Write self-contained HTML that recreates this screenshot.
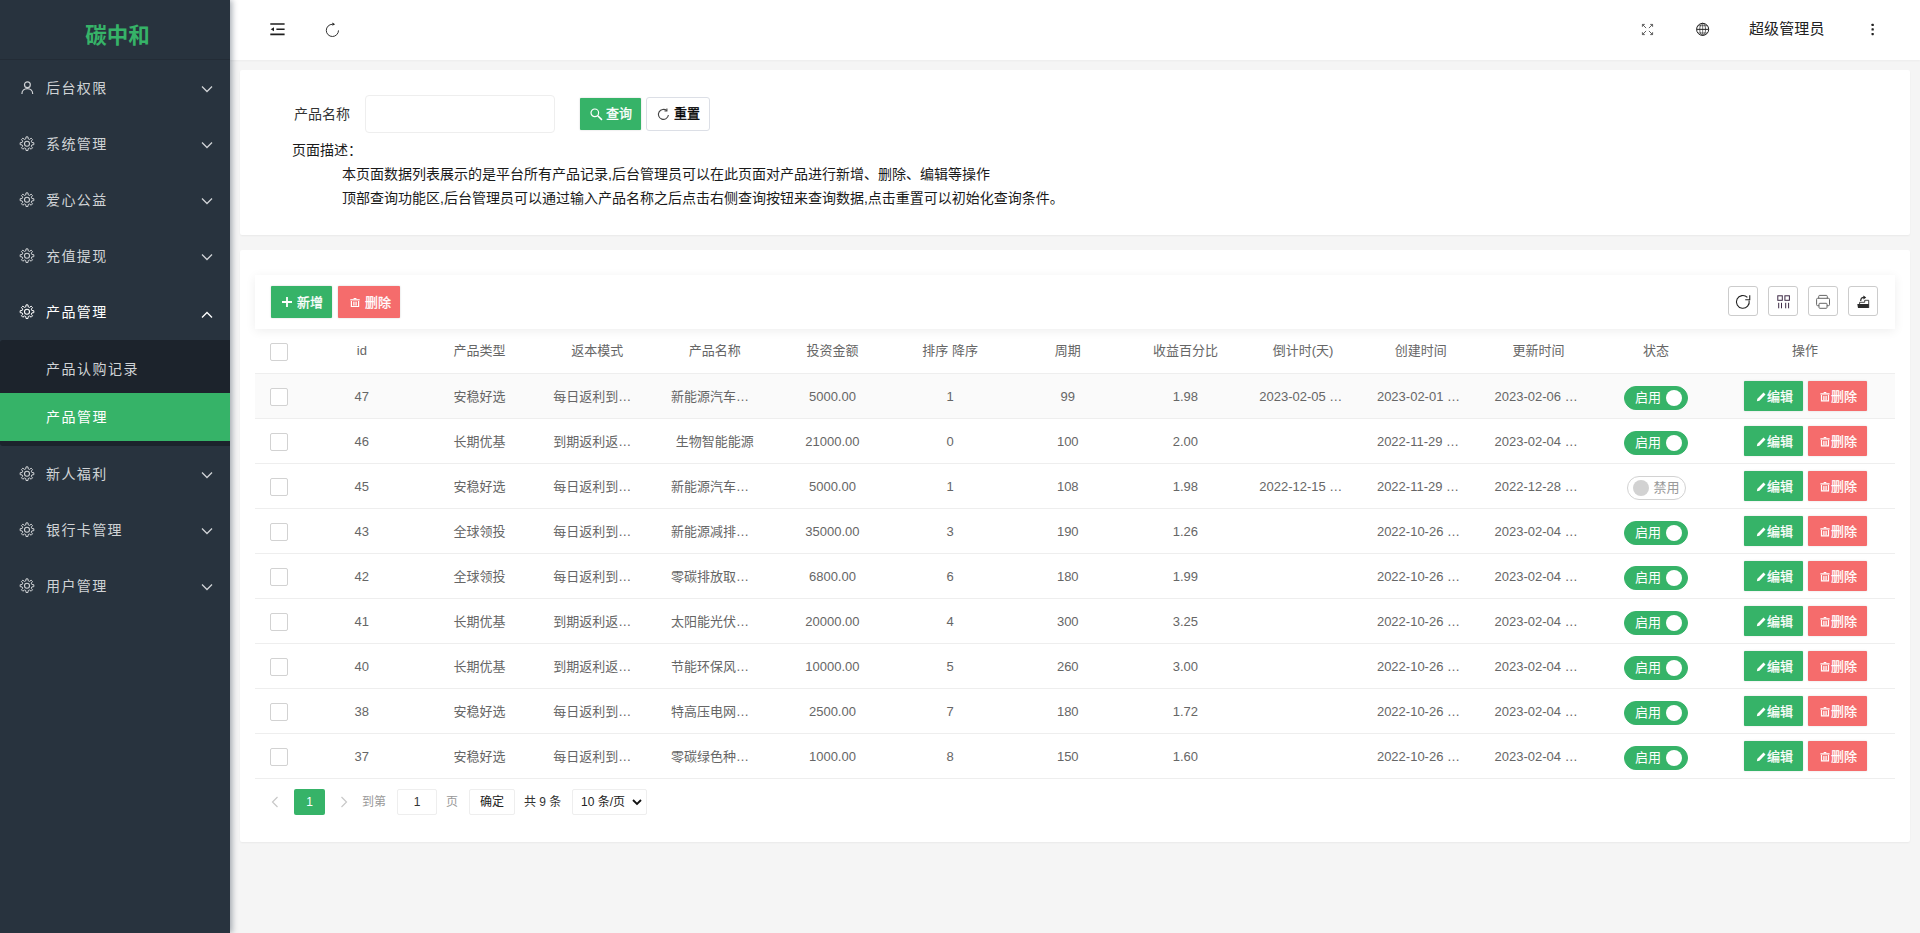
<!DOCTYPE html>
<html lang="zh-CN">
<head>
<meta charset="utf-8">
<title>碳中和</title>
<style>
*{box-sizing:border-box;margin:0;padding:0}
html,body{width:1920px;height:933px;overflow:hidden}
body{font:14px/24px "Liberation Sans","Noto Sans CJK SC",sans-serif;color:#333;background:#f5f5f5;position:relative}
ul{list-style:none}
svg{display:block}
/* ---------- sidebar ---------- */
.side{position:absolute;left:0;top:0;width:230px;height:933px;background:#28333e;z-index:10;box-shadow:2px 0 6px rgba(0,21,41,.35)}
.logo{height:60px;line-height:60px;text-align:center;color:#36b368;font-size:21.5px;font-weight:bold;border-bottom:1px solid rgba(0,0,0,.12);padding-top:5.5px;padding-left:5px;letter-spacing:0}
.nav>li>a{display:block;height:56px;line-height:56px;color:#d0d3d6;font-size:14px;position:relative;padding-left:46px;letter-spacing:1.4px}
.nav>li>a.on{color:#fff}
.nav .ico{position:absolute;left:19px;top:20px;width:16px;height:16px}
.nav .arr{position:absolute;left:201px;top:24px;width:12px;height:8px}
.sub{background:#1c232c;padding:5px 0;height:106px;border-radius:3px 0 0 3px}
.sub a{display:block;height:48px;line-height:48px;padding-left:46px;color:#d0d3d6;font-size:14px;letter-spacing:1.5px}
.sub a.cur{background:#36b368;color:#fff}
/* ---------- header ---------- */
.head{position:absolute;left:230px;top:0;width:1690px;height:60px;background:#fff;box-shadow:0 1px 2px rgba(0,0,0,.04)}
.head .hi{position:absolute;top:21px}
.head .uname{position:absolute;left:1519px;top:0;line-height:58px;font-size:15px;color:#222;letter-spacing:.1px}
/* ---------- cards ---------- */
.card{position:absolute;left:240px;width:1670px;background:#fff;border-radius:2px;box-shadow:0 1px 2px rgba(0,0,0,.05)}
.c1{top:70px;height:165px}
.c2{top:250px;height:592px}
.lbl{position:absolute;left:54px;top:32px;font-size:14px;line-height:24px;color:#333}
.inp{position:absolute;left:125px;top:25px;width:190px;height:38px;border:1px solid #eee;border-radius:4px;background:#fff}
.btn{position:absolute;display:block;color:#fff;font-size:13px;white-space:nowrap;border-radius:1px;-webkit-text-stroke:.3px #fff}
.btn.rs{-webkit-text-stroke:.3px #000}
.desc{position:absolute;left:52px;font-size:14px;line-height:24px;color:#1a1a1a;white-space:nowrap}
/* ---------- table ---------- */
.tool{position:absolute;left:15px;top:25px;width:1640px;height:54px;background:#fff;box-shadow:0 2px 10px rgba(0,0,0,.07);z-index:2}
.tbox{position:absolute;top:11px;width:30px;height:30px;border:1px solid #ccc;border-radius:3px;background:#fff}
table{position:absolute;left:15px;top:79px;width:1640px;border-collapse:separate;border-spacing:0;table-layout:fixed;font-size:13px;color:#666}
th,td{padding-top:1px !important;height:45px;border-bottom:1px solid #eee;text-align:center;font-weight:normal;white-space:nowrap;overflow:hidden;padding:0;line-height:24px;vertical-align:middle}
tr.hov td{background:#fafafa}
th{padding-top:0 !important}
td.l{text-align:left;padding-left:15px}
.ti{position:absolute;left:-1px;top:-1px}
.cb{display:block;width:18px;height:18px;border:1px solid #d2d2d2;border-radius:2px;background:#fff;margin:1px 0 0 15px}
.sw{display:inline-block;vertical-align:middle;height:24px;border-radius:12px;position:relative;font-size:13px;line-height:22px;margin-top:3px}
.sw.on{width:64px;background:#36b368;border:1px solid #36b368;color:#fff;text-align:left;padding-left:10px}
.sw.on i{position:absolute;right:5px;top:3px;width:16px;height:16px;border-radius:50%;background:#fff}
.sw.off{width:59px;background:#fff;border:1px solid #d2d2d2;color:#999;text-align:left;padding-left:26px}
.sw.off i{position:absolute;left:5px;top:3px;width:16px;height:16px;border-radius:50%;background:#d2d2d2}
.ab{margin-top:-1px;display:inline-block;vertical-align:middle;width:59px;height:30px;line-height:32px;color:#fff;font-size:13px;-webkit-text-stroke:.25px #fff;border-radius:1px;position:relative;text-align:left;box-shadow:0 0 2px rgba(0,0,0,.15)}
.ab.e{background:#36b368;margin-right:5px;padding-left:23px}
.ab.d{background:#f56c6c;padding-left:23px}
.ab svg{position:absolute;left:12px;top:11px}
td.op{padding-left:1px}
.pg{position:absolute;left:15px;top:538px;height:28px;font-size:12px;color:#999;line-height:28px}
.pg>*{position:absolute;top:0;white-space:nowrap}
</style>
</head>
<body>
<div class="side">
  <div class="logo">碳中和</div>
  <ul class="nav">
    <li><a><svg class="ico" viewBox="0 0 16 16" width="16" height="16" fill="none" stroke="currentColor" stroke-width="1.200"><circle cx="8.400" cy="4.800" r="2.900"/><path d="M2.900 13.900C2.900 10.600 5.400 8.700 8.300 8.700S13.700 10.600 13.700 13.900"/></svg>后台权限<svg class="arr" style="top:25px" viewBox="0 0 12 8" width="12" height="8" fill="none" stroke="currentColor" stroke-width="1.3"><path d="M1 1.5l5 5 5-5"/></svg></a></li>
    <li><a><svg class="ico" viewBox="0 0 16 16" width="16" height="16" fill="none" stroke="currentColor" stroke-width="1" stroke-linejoin="round"><circle cx="8" cy="7.700" r="2.500" stroke-width="1.100"/><path d="M6.79 2.85L7.03 0.87L8.97 0.87L9.21 2.85L10.58 3.42L12.14 2.18L13.52 3.56L12.28 5.12L12.85 6.49L14.83 6.73L14.83 8.67L12.85 8.91L12.28 10.28L13.52 11.84L12.14 13.22L10.58 11.98L9.21 12.55L8.97 14.53L7.03 14.53L6.79 12.55L5.42 11.98L3.86 13.22L2.48 11.84L3.72 10.28L3.15 8.91L1.17 8.67L1.17 6.73L3.15 6.49L3.72 5.12L2.48 3.56L3.86 2.18L5.42 3.42z"/></svg>系统管理<svg class="arr" style="top:25px" viewBox="0 0 12 8" width="12" height="8" fill="none" stroke="currentColor" stroke-width="1.3"><path d="M1 1.5l5 5 5-5"/></svg></a></li>
    <li><a><svg class="ico" viewBox="0 0 16 16" width="16" height="16" fill="none" stroke="currentColor" stroke-width="1" stroke-linejoin="round"><circle cx="8" cy="7.700" r="2.500" stroke-width="1.100"/><path d="M6.79 2.85L7.03 0.87L8.97 0.87L9.21 2.85L10.58 3.42L12.14 2.18L13.52 3.56L12.28 5.12L12.85 6.49L14.83 6.73L14.83 8.67L12.85 8.91L12.28 10.28L13.52 11.84L12.14 13.22L10.58 11.98L9.21 12.55L8.97 14.53L7.03 14.53L6.79 12.55L5.42 11.98L3.86 13.22L2.48 11.84L3.72 10.28L3.15 8.91L1.17 8.67L1.17 6.73L3.15 6.49L3.72 5.12L2.48 3.56L3.86 2.18L5.42 3.42z"/></svg>爱心公益<svg class="arr" style="top:25px" viewBox="0 0 12 8" width="12" height="8" fill="none" stroke="currentColor" stroke-width="1.3"><path d="M1 1.5l5 5 5-5"/></svg></a></li>
    <li><a><svg class="ico" viewBox="0 0 16 16" width="16" height="16" fill="none" stroke="currentColor" stroke-width="1" stroke-linejoin="round"><circle cx="8" cy="7.700" r="2.500" stroke-width="1.100"/><path d="M6.79 2.85L7.03 0.87L8.97 0.87L9.21 2.85L10.58 3.42L12.14 2.18L13.52 3.56L12.28 5.12L12.85 6.49L14.83 6.73L14.83 8.67L12.85 8.91L12.28 10.28L13.52 11.84L12.14 13.22L10.58 11.98L9.21 12.55L8.97 14.53L7.03 14.53L6.79 12.55L5.42 11.98L3.86 13.22L2.48 11.84L3.72 10.28L3.15 8.91L1.17 8.67L1.17 6.73L3.15 6.49L3.72 5.12L2.48 3.56L3.86 2.18L5.42 3.42z"/></svg>充值提现<svg class="arr" style="top:25px" viewBox="0 0 12 8" width="12" height="8" fill="none" stroke="currentColor" stroke-width="1.3"><path d="M1 1.5l5 5 5-5"/></svg></a></li>
    <li><a class="on"><svg class="ico" viewBox="0 0 16 16" width="16" height="16" fill="none" stroke="currentColor" stroke-width="1" stroke-linejoin="round"><circle cx="8" cy="7.700" r="2.500" stroke-width="1.100"/><path d="M6.79 2.85L7.03 0.87L8.97 0.87L9.21 2.85L10.58 3.42L12.14 2.18L13.52 3.56L12.28 5.12L12.85 6.49L14.83 6.73L14.83 8.67L12.85 8.91L12.28 10.28L13.52 11.84L12.14 13.22L10.58 11.98L9.21 12.55L8.97 14.53L7.03 14.53L6.79 12.55L5.42 11.98L3.86 13.22L2.48 11.84L3.72 10.28L3.15 8.91L1.17 8.67L1.17 6.73L3.15 6.49L3.72 5.12L2.48 3.56L3.86 2.18L5.42 3.42z"/></svg>产品管理<svg class="arr" viewBox="0 0 12 8" width="12" height="8" fill="none" stroke="currentColor" stroke-width="1.3" style="top:26.500px"><path d="M1 6.5l5-5 5 5"/></svg></a><div class="sub"><a>产品认购记录</a><a class="cur">产品管理</a></div></li>
    <li><a><svg class="ico" viewBox="0 0 16 16" width="16" height="16" fill="none" stroke="currentColor" stroke-width="1" stroke-linejoin="round"><circle cx="8" cy="7.700" r="2.500" stroke-width="1.100"/><path d="M6.79 2.85L7.03 0.87L8.97 0.87L9.21 2.85L10.58 3.42L12.14 2.18L13.52 3.56L12.28 5.12L12.85 6.49L14.83 6.73L14.83 8.67L12.85 8.91L12.28 10.28L13.52 11.84L12.14 13.22L10.58 11.98L9.21 12.55L8.97 14.53L7.03 14.53L6.79 12.55L5.42 11.98L3.86 13.22L2.48 11.84L3.72 10.28L3.15 8.91L1.17 8.67L1.17 6.73L3.15 6.49L3.72 5.12L2.48 3.56L3.86 2.18L5.42 3.42z"/></svg>新人福利<svg class="arr" style="top:25px" viewBox="0 0 12 8" width="12" height="8" fill="none" stroke="currentColor" stroke-width="1.3"><path d="M1 1.5l5 5 5-5"/></svg></a></li>
    <li><a><svg class="ico" viewBox="0 0 16 16" width="16" height="16" fill="none" stroke="currentColor" stroke-width="1" stroke-linejoin="round"><circle cx="8" cy="7.700" r="2.500" stroke-width="1.100"/><path d="M6.79 2.85L7.03 0.87L8.97 0.87L9.21 2.85L10.58 3.42L12.14 2.18L13.52 3.56L12.28 5.12L12.85 6.49L14.83 6.73L14.83 8.67L12.85 8.91L12.28 10.28L13.52 11.84L12.14 13.22L10.58 11.98L9.21 12.55L8.97 14.53L7.03 14.53L6.79 12.55L5.42 11.98L3.86 13.22L2.48 11.84L3.72 10.28L3.15 8.91L1.17 8.67L1.17 6.73L3.15 6.49L3.72 5.12L2.48 3.56L3.86 2.18L5.42 3.42z"/></svg>银行卡管理<svg class="arr" style="top:25px" viewBox="0 0 12 8" width="12" height="8" fill="none" stroke="currentColor" stroke-width="1.3"><path d="M1 1.5l5 5 5-5"/></svg></a></li>
    <li><a><svg class="ico" viewBox="0 0 16 16" width="16" height="16" fill="none" stroke="currentColor" stroke-width="1" stroke-linejoin="round"><circle cx="8" cy="7.700" r="2.500" stroke-width="1.100"/><path d="M6.79 2.85L7.03 0.87L8.97 0.87L9.21 2.85L10.58 3.42L12.14 2.18L13.52 3.56L12.28 5.12L12.85 6.49L14.83 6.73L14.83 8.67L12.85 8.91L12.28 10.28L13.52 11.84L12.14 13.22L10.58 11.98L9.21 12.55L8.97 14.53L7.03 14.53L6.79 12.55L5.42 11.98L3.86 13.22L2.48 11.84L3.72 10.28L3.15 8.91L1.17 8.67L1.17 6.73L3.15 6.49L3.72 5.12L2.48 3.56L3.86 2.18L5.42 3.42z"/></svg>用户管理<svg class="arr" style="top:25px" viewBox="0 0 12 8" width="12" height="8" fill="none" stroke="currentColor" stroke-width="1.3"><path d="M1 1.5l5 5 5-5"/></svg></a></li>
  </ul>
</div>
<div class="head">
<svg class="hi" style="left:38px;top:20px" width="20" height="20" viewBox="0 0 20 20" fill="none" stroke="#1f1f1f" stroke-width="1.65"><path d="M2.300 4h14.300M8.400 9.250h8.200M2.300 14.400h14.300"/><path d="M6 7.300L2.700 9.250 6 11.200z" fill="#1f1f1f" stroke="none"/></svg>
<svg class="hi" style="left:94px;top:22px" width="16" height="16" viewBox="0 0 16 16" fill="none" stroke="#333" stroke-width="1"><path d="M14.500 8.400A6.100 6.100 0 1 1 8.400 2.300"/><path d="M8.400 .600L11.100 2.200 8.400 3.800z" fill="#222" stroke="none"/></svg>
<svg class="hi" style="left:1411px;top:22.500px" width="14" height="14" viewBox="0 0 14 14" fill="none" stroke="#444" stroke-width=".85"><path d="M1.400 3.800V1.400h2.400M1.600 1.600l3.500 3.500M9.200 1.400h2.400v2.400M11.400 1.600L7.900 5.100M1.400 9.200v2.400h2.400M1.600 11.400l3.500-3.500M11.600 9.200v2.400H9.200M11.400 11.400L7.900 7.900"/></svg>
<svg class="hi" style="left:1465px;top:22px" width="15" height="15" viewBox="0 0 15 15" fill="none" stroke="#222"><circle cx="7.650" cy="7.350" r="6.050" stroke-width="1"/><ellipse cx="7.650" cy="7.350" rx="2.900" ry="6.050" stroke-width=".7"/><path d="M1.600 7.350h12.100" stroke-width="1"/><path d="M7.650 1.300v12.100M3 3.700h9.300M3 11h9.300" stroke-width=".6"/></svg>
<svg class="hi" style="left:1640px;top:23px" width="6" height="14" viewBox="0 0 6 14" fill="#222"><rect x="1.500" y=".700" width="2.300" height="2.300" rx=".6"/><rect x="1.500" y="5.300" width="2.300" height="2.300" rx=".6"/><rect x="1.500" y="9.900" width="2.300" height="2.300" rx=".6"/></svg>
  <span class="uname">超级管理员</span>
</div>
<div class="card c1">
  <span class="lbl">产品名称</span>
  <div class="inp"></div>
<span class="btn" style="left:340px;top:28px;width:61px;height:32px;line-height:32px;background:#36b368;padding-left:26px;box-shadow:0 0 2px rgba(0,0,0,.2)"><svg style="position:absolute;left:10px;top:9.500px" width="13" height="13" viewBox="0 0 13 13" fill="none" stroke="#fff" stroke-width="1.200"><circle cx="4.800" cy="4.800" r="3.800"/><path d="M7.700 7.700l4.300 4.200" stroke-width="1.500"/></svg>查询</span>
<span class="btn rs" style="left:406px;top:27px;width:64px;height:34px;line-height:32px;background:#fff;border:1px solid #dcdfe6;color:#000;padding-left:27px;border-radius:3px"><svg style="position:absolute;left:10px;top:9.500px" width="13" height="13" viewBox="0 0 13 13" fill="none" stroke="#444" stroke-width="1.100"><path d="M11.400 7A5 5 0 1 1 9.800 2.700"/><path d="M9.900.600v2.400H7.500"/></svg>重置</span>
  <div class="desc" style="top:68px">页面描述：</div>
  <div class="desc" style="top:92px;left:102px">本页面数据列表展示的是平台所有产品记录,后台管理员可以在此页面对产品进行新增、删除、编辑等操作</div>
  <div class="desc" style="top:116px;left:102px">顶部查询功能区,后台管理员可以通过输入产品名称之后点击右侧查询按钮来查询数据,点击重置可以初始化查询条件。</div>
</div>
<div class="card c2">
  <div class="tool">
<span class="btn" style="left:16px;top:11px;width:61px;height:32px;line-height:33px;background:#36b368;padding-left:26px;box-shadow:0 0 2px rgba(0,0,0,.2)"><svg style="position:absolute;left:11px;top:11px" width="10" height="10" viewBox="0 0 10 10" stroke="#fff" stroke-width="1.800"><path d="M5 0v10M0 5h10"/></svg>新增</span>
<span class="btn" style="left:83px;top:11px;width:62px;height:32px;line-height:33px;background:#f56c6c;padding-left:27px;box-shadow:0 0 2px rgba(0,0,0,.2)"><svg style="position:absolute;left:12px;top:12px" width="10" height="10" viewBox="0 0 10 10" fill="none" stroke="#fff"><path d="M3.600 .500h2.800" stroke-width="1"/><path d="M.300 1.800h9.400" stroke-width="1.200"/><path d="M1.400 2.900v5.600h7.200V2.900" stroke-width="1.200"/><path d="M3.700 3.600v4M6.300 3.600v4M5 3.600v4" stroke-width=".9"/></svg>删除</span>
<span class="tbox" style="left:1473px"><svg class="ti" width="30" height="30" viewBox="0 0 30 30" fill="none" stroke="#222" stroke-width="1.100"><path d="M19.400 11.400A6.400 6.400 0 1 0 21.100 14.500"/><path d="M21.750 9.300v4.400h-4.500"/></svg></span>
<span class="tbox" style="left:1513px"><svg class="ti" width="30" height="30" viewBox="0 0 30 30" fill="none" stroke="#3d2a45" stroke-width="1"><rect x="9.800" y="9.800" width="4.500" height="4.500"/><rect x="16.900" y="9.800" width="4.500" height="4.500"/><path d="M10.700 16.800v5.500M13.500 16.800v5.500M17.700 16.800v5.500M20.600 16.800v5.500"/></svg></span>
<span class="tbox" style="left:1553px"><svg class="ti" width="30" height="30" viewBox="0 0 30 30" fill="none" stroke="#666" stroke-width="1"><path d="M10.700 12.300V10.400a1 1 0 0 1 1-1h6.600a1 1 0 0 1 1 1v1.900"/><path d="M11 19.700H9.600a1 1 0 0 1-1-1v-5.400a1 1 0 0 1 1-1h10.900a1 1 0 0 1 1 1v5.400a1 1 0 0 1-1 1H19"/><rect x="11" y="17.300" width="8" height="5" rx=".8"/></svg></span>
<span class="tbox" style="left:1593px"><svg class="ti" width="30" height="30" viewBox="0 0 30 30"><path d="M9.300 18h11.600v4.100H10z" fill="#2b2b2b"/><path d="M11.600 18v-1.700h5.100v-2h4v7.600" fill="none" stroke="#333" stroke-width=".9"/><path d="M12.700 15c0-2.600 1.300-3.600 3.200-3.600" fill="none" stroke="#333" stroke-width="1.300"/><path d="M15.400 9.500l2.800 2-2.800 1.900z" fill="#222"/></svg></span>
  </div>
  <table>
<colgroup><col style="width:48px"><col style="width:117.67px"><col style="width:117.67px"><col style="width:117.67px"><col style="width:117.67px"><col style="width:117.67px"><col style="width:117.67px"><col style="width:117.67px"><col style="width:117.67px"><col style="width:117.67px"><col style="width:117.67px"><col style="width:117.67px"><col style="width:117.67px"><col style="width:180px"></colgroup>
<tr><th><i class="cb"></i></th><th>id</th><th>产品类型</th><th>返本模式</th><th>产品名称</th><th>投资金额</th><th>排序 降序</th><th>周期</th><th>收益百分比</th><th>倒计时(天)</th><th>创建时间</th><th>更新时间</th><th>状态</th><th>操作</th></tr>
<tr class="hov"><td><i class="cb"></i></td><td>47</td><td>安稳好选</td><td class="l">每日返利到…</td><td class="l">新能源汽车…</td><td>5000.00</td><td>1</td><td>99</td><td>1.98</td><td class="l">2023-02-05 …</td><td class="l">2023-02-01 …</td><td class="l">2023-02-06 …</td><td class="st"><span class="sw on">启用<i></i></span></td><td class="op"><span class="ab e"><svg viewBox="0 0 10 10" width="10" height="10"><path d="M0.800 9.300l.6-2.600L7.500.600l2 2-6.100 6.100z" fill="#fff"/></svg>编辑</span><span class="ab d"><svg viewBox="0 0 10 10" width="10" height="10" fill="none" stroke="#fff"><path d="M3.700 .500h2.600" stroke-width="1"/><path d="M.400 1.900h9.200" stroke-width="1.300"/><path d="M1.500 3v5.900h7V3" stroke-width="1.200"/><path d="M3.700 3.800v4.400M6.300 3.800v4.400M5 3.800v4.400" stroke-width=".9"/></svg>删除</span></td></tr>
<tr><td><i class="cb"></i></td><td>46</td><td>长期优基</td><td class="l">到期返利返…</td><td>生物智能能源</td><td>21000.00</td><td>0</td><td>100</td><td>2.00</td><td></td><td class="l">2022-11-29 …</td><td class="l">2023-02-04 …</td><td class="st"><span class="sw on">启用<i></i></span></td><td class="op"><span class="ab e"><svg viewBox="0 0 10 10" width="10" height="10"><path d="M0.800 9.300l.6-2.600L7.500.600l2 2-6.100 6.100z" fill="#fff"/></svg>编辑</span><span class="ab d"><svg viewBox="0 0 10 10" width="10" height="10" fill="none" stroke="#fff"><path d="M3.700 .500h2.600" stroke-width="1"/><path d="M.400 1.900h9.200" stroke-width="1.300"/><path d="M1.500 3v5.900h7V3" stroke-width="1.200"/><path d="M3.700 3.800v4.400M6.300 3.800v4.400M5 3.800v4.400" stroke-width=".9"/></svg>删除</span></td></tr>
<tr><td><i class="cb"></i></td><td>45</td><td>安稳好选</td><td class="l">每日返利到…</td><td class="l">新能源汽车…</td><td>5000.00</td><td>1</td><td>108</td><td>1.98</td><td class="l">2022-12-15 …</td><td class="l">2022-11-29 …</td><td class="l">2022-12-28 …</td><td class="st"><span class="sw off">禁用<i></i></span></td><td class="op"><span class="ab e"><svg viewBox="0 0 10 10" width="10" height="10"><path d="M0.800 9.300l.6-2.600L7.500.600l2 2-6.100 6.100z" fill="#fff"/></svg>编辑</span><span class="ab d"><svg viewBox="0 0 10 10" width="10" height="10" fill="none" stroke="#fff"><path d="M3.700 .500h2.600" stroke-width="1"/><path d="M.400 1.900h9.200" stroke-width="1.300"/><path d="M1.500 3v5.900h7V3" stroke-width="1.200"/><path d="M3.700 3.800v4.400M6.300 3.800v4.400M5 3.800v4.400" stroke-width=".9"/></svg>删除</span></td></tr>
<tr><td><i class="cb"></i></td><td>43</td><td>全球领投</td><td class="l">每日返利到…</td><td class="l">新能源减排…</td><td>35000.00</td><td>3</td><td>190</td><td>1.26</td><td></td><td class="l">2022-10-26 …</td><td class="l">2023-02-04 …</td><td class="st"><span class="sw on">启用<i></i></span></td><td class="op"><span class="ab e"><svg viewBox="0 0 10 10" width="10" height="10"><path d="M0.800 9.300l.6-2.600L7.500.600l2 2-6.100 6.100z" fill="#fff"/></svg>编辑</span><span class="ab d"><svg viewBox="0 0 10 10" width="10" height="10" fill="none" stroke="#fff"><path d="M3.700 .500h2.600" stroke-width="1"/><path d="M.400 1.900h9.200" stroke-width="1.300"/><path d="M1.500 3v5.900h7V3" stroke-width="1.200"/><path d="M3.700 3.800v4.400M6.300 3.800v4.400M5 3.800v4.400" stroke-width=".9"/></svg>删除</span></td></tr>
<tr><td><i class="cb"></i></td><td>42</td><td>全球领投</td><td class="l">每日返利到…</td><td class="l">零碳排放取…</td><td>6800.00</td><td>6</td><td>180</td><td>1.99</td><td></td><td class="l">2022-10-26 …</td><td class="l">2023-02-04 …</td><td class="st"><span class="sw on">启用<i></i></span></td><td class="op"><span class="ab e"><svg viewBox="0 0 10 10" width="10" height="10"><path d="M0.800 9.300l.6-2.600L7.500.600l2 2-6.100 6.100z" fill="#fff"/></svg>编辑</span><span class="ab d"><svg viewBox="0 0 10 10" width="10" height="10" fill="none" stroke="#fff"><path d="M3.700 .500h2.600" stroke-width="1"/><path d="M.400 1.900h9.200" stroke-width="1.300"/><path d="M1.500 3v5.900h7V3" stroke-width="1.200"/><path d="M3.700 3.800v4.400M6.300 3.800v4.400M5 3.800v4.400" stroke-width=".9"/></svg>删除</span></td></tr>
<tr><td><i class="cb"></i></td><td>41</td><td>长期优基</td><td class="l">到期返利返…</td><td class="l">太阳能光伏…</td><td>20000.00</td><td>4</td><td>300</td><td>3.25</td><td></td><td class="l">2022-10-26 …</td><td class="l">2023-02-04 …</td><td class="st"><span class="sw on">启用<i></i></span></td><td class="op"><span class="ab e"><svg viewBox="0 0 10 10" width="10" height="10"><path d="M0.800 9.300l.6-2.600L7.500.600l2 2-6.100 6.100z" fill="#fff"/></svg>编辑</span><span class="ab d"><svg viewBox="0 0 10 10" width="10" height="10" fill="none" stroke="#fff"><path d="M3.700 .500h2.600" stroke-width="1"/><path d="M.400 1.900h9.200" stroke-width="1.300"/><path d="M1.500 3v5.900h7V3" stroke-width="1.200"/><path d="M3.700 3.800v4.400M6.300 3.800v4.400M5 3.800v4.400" stroke-width=".9"/></svg>删除</span></td></tr>
<tr><td><i class="cb"></i></td><td>40</td><td>长期优基</td><td class="l">到期返利返…</td><td class="l">节能环保风…</td><td>10000.00</td><td>5</td><td>260</td><td>3.00</td><td></td><td class="l">2022-10-26 …</td><td class="l">2023-02-04 …</td><td class="st"><span class="sw on">启用<i></i></span></td><td class="op"><span class="ab e"><svg viewBox="0 0 10 10" width="10" height="10"><path d="M0.800 9.300l.6-2.600L7.500.600l2 2-6.100 6.100z" fill="#fff"/></svg>编辑</span><span class="ab d"><svg viewBox="0 0 10 10" width="10" height="10" fill="none" stroke="#fff"><path d="M3.700 .500h2.600" stroke-width="1"/><path d="M.400 1.900h9.200" stroke-width="1.300"/><path d="M1.500 3v5.900h7V3" stroke-width="1.200"/><path d="M3.700 3.800v4.400M6.300 3.800v4.400M5 3.800v4.400" stroke-width=".9"/></svg>删除</span></td></tr>
<tr><td><i class="cb"></i></td><td>38</td><td>安稳好选</td><td class="l">每日返利到…</td><td class="l">特高压电网…</td><td>2500.00</td><td>7</td><td>180</td><td>1.72</td><td></td><td class="l">2022-10-26 …</td><td class="l">2023-02-04 …</td><td class="st"><span class="sw on">启用<i></i></span></td><td class="op"><span class="ab e"><svg viewBox="0 0 10 10" width="10" height="10"><path d="M0.800 9.300l.6-2.600L7.500.600l2 2-6.100 6.100z" fill="#fff"/></svg>编辑</span><span class="ab d"><svg viewBox="0 0 10 10" width="10" height="10" fill="none" stroke="#fff"><path d="M3.700 .500h2.600" stroke-width="1"/><path d="M.400 1.900h9.200" stroke-width="1.300"/><path d="M1.500 3v5.900h7V3" stroke-width="1.200"/><path d="M3.700 3.800v4.400M6.300 3.800v4.400M5 3.800v4.400" stroke-width=".9"/></svg>删除</span></td></tr>
<tr><td><i class="cb"></i></td><td>37</td><td>安稳好选</td><td class="l">每日返利到…</td><td class="l">零碳绿色种…</td><td>1000.00</td><td>8</td><td>150</td><td>1.60</td><td></td><td class="l">2022-10-26 …</td><td class="l">2023-02-04 …</td><td class="st"><span class="sw on">启用<i></i></span></td><td class="op"><span class="ab e"><svg viewBox="0 0 10 10" width="10" height="10"><path d="M0.800 9.300l.6-2.600L7.500.600l2 2-6.100 6.100z" fill="#fff"/></svg>编辑</span><span class="ab d"><svg viewBox="0 0 10 10" width="10" height="10" fill="none" stroke="#fff"><path d="M3.700 .500h2.600" stroke-width="1"/><path d="M.400 1.900h9.200" stroke-width="1.300"/><path d="M1.500 3v5.900h7V3" stroke-width="1.200"/><path d="M3.700 3.800v4.400M6.300 3.800v4.400M5 3.800v4.400" stroke-width=".9"/></svg>删除</span></td></tr>
  </table>
  <div class="pg">
<svg style="left:16px;top:8px" width="8" height="12" viewBox="0 0 8 12" fill="none" stroke="#c8c8c8" stroke-width="1.200"><path d="M6.500 1L1.500 6l5 5"/></svg>
<span style="left:39px;width:31px;height:26px;top:1px;line-height:26px;background:#36b368;color:#fff;text-align:center;border-radius:2px">1</span>
<svg style="left:85px;top:8px" width="8" height="12" viewBox="0 0 8 12" fill="none" stroke="#c8c8c8" stroke-width="1.200"><path d="M1.500 1l5 5-5 5"/></svg>
<span style="left:107px">到第</span>
<span style="left:142px;top:1px;width:40px;height:26px;line-height:24px;border:1px solid #eee;border-radius:2px;text-align:center;color:#333">1</span>
<span style="left:191px">页</span>
<span style="left:214px;top:1px;width:46px;height:26px;line-height:24px;border:1px solid #eee;border-radius:2px;text-align:center;color:#222">确定</span>
<span style="left:269px;color:#333">共 9 条</span>
<span style="left:317px;top:1px;width:75px;height:26px;line-height:24px;border:1px solid #eee;border-radius:2px;color:#222;padding-left:8px">10 条/页<svg style="position:absolute;left:59px;top:9px" width="10" height="7" viewBox="0 0 10 7" fill="none" stroke="#111" stroke-width="1.800"><path d="M1 1l4 4 4-4"/></svg></span>
  </div>
</div>
</body>
</html>
